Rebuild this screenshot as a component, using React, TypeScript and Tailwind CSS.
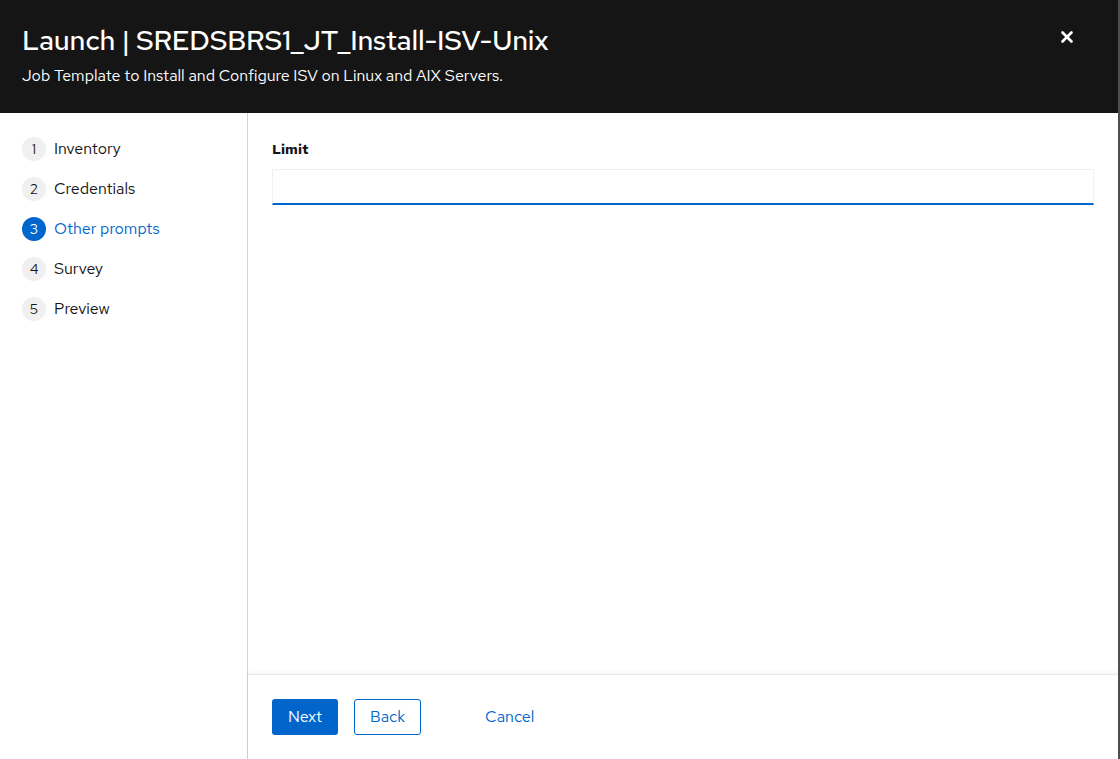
import { X } from "lucide-react";

const steps: string[] = ["Inventory", "Credentials", "Other prompts", "Survey", "Preview"];
const current = 2;

const font = { fontFamily: '"Red Hat Text", "Noto Sans", "Liberation Sans", sans-serif' };

export default function App() {
  return (
    <div className="flex h-[759px] w-[1120px] bg-[#4f4f4f]" style={font}>
      <div className="flex h-full w-[1118px] flex-col bg-white">
        {/* Header */}
        <div className="flex h-[113px] shrink-0 items-start justify-between bg-[#151515] pl-[22px] pr-[42px] pt-[22px]">
          <div>
            <h1 className="text-[28px] leading-[36px] font-medium tracking-[-0.2px] text-white">
              Launch | SREDSBRS1_JT_Install-ISV-Unix
            </h1>
            <p className="mt-[8px] text-[16px] leading-[20px] text-white">
              Job Template to Install and Configure ISV on Linux and AIX Servers.
            </p>
          </div>
          <button className="mt-[6px] text-white" aria-label="Close">
            <X size={18} strokeWidth={3.5} />
          </button>
        </div>

        {/* Body */}
        <div className="flex min-h-0 flex-1">
          {/* Steps */}
          <nav className="w-[248px] shrink-0 border-r border-[#d2d2d2] pl-[22px] pt-[24px]">
            <ul className="flex flex-col gap-[16px]">
              {steps.map((s, i) => (
                <li key={s} className="flex h-[24px] items-center gap-[8px]">
                  <span
                    className={`flex h-[24px] w-[24px] items-center justify-center rounded-full text-[14px] ${
                      i === current ? "bg-[#0066cc] text-white" : "bg-[#f0f0f0] text-[#151515]"
                    }`}
                  >
                    {i + 1}
                  </span>
                  <span className={`text-[16px] ${i === current ? "text-[#0066cc]" : "text-[#151515]"}`}>
                    {s}
                  </span>
                </li>
              ))}
            </ul>
          </nav>

          {/* Main */}
          <div className="flex min-w-0 flex-1 flex-col">
            <div className="flex-1 px-[24px] pt-[26px]">
              <label className="block text-[14px] leading-[20px] font-bold text-[#151515]">Limit</label>
              <input
                className="mt-[10px] block h-[36px] w-full border border-[#f0f0f0] border-b-2 border-b-[#0066cc] bg-white px-2 text-[14px] outline-none"
                type="text"
              />
            </div>

            {/* Footer */}
            <div className="flex h-[85px] shrink-0 items-center gap-[16px] border-t border-[#e8e8e8] px-[24px] shadow-[0_-2px_4px_rgba(0,0,0,0.04)]">
              <button className="h-[36px] rounded-[3px] bg-[#0066cc] px-[16px] text-[16px] text-white">Next</button>
              <button className="h-[36px] rounded-[3px] border border-[#0066cc] px-[15px] text-[16px] text-[#0066cc]">
                Back
              </button>
              <button className="ml-[48px] h-[36px] text-[16px] text-[#0066cc]">Cancel</button>
            </div>
          </div>
        </div>
      </div>
    </div>
  );
}
